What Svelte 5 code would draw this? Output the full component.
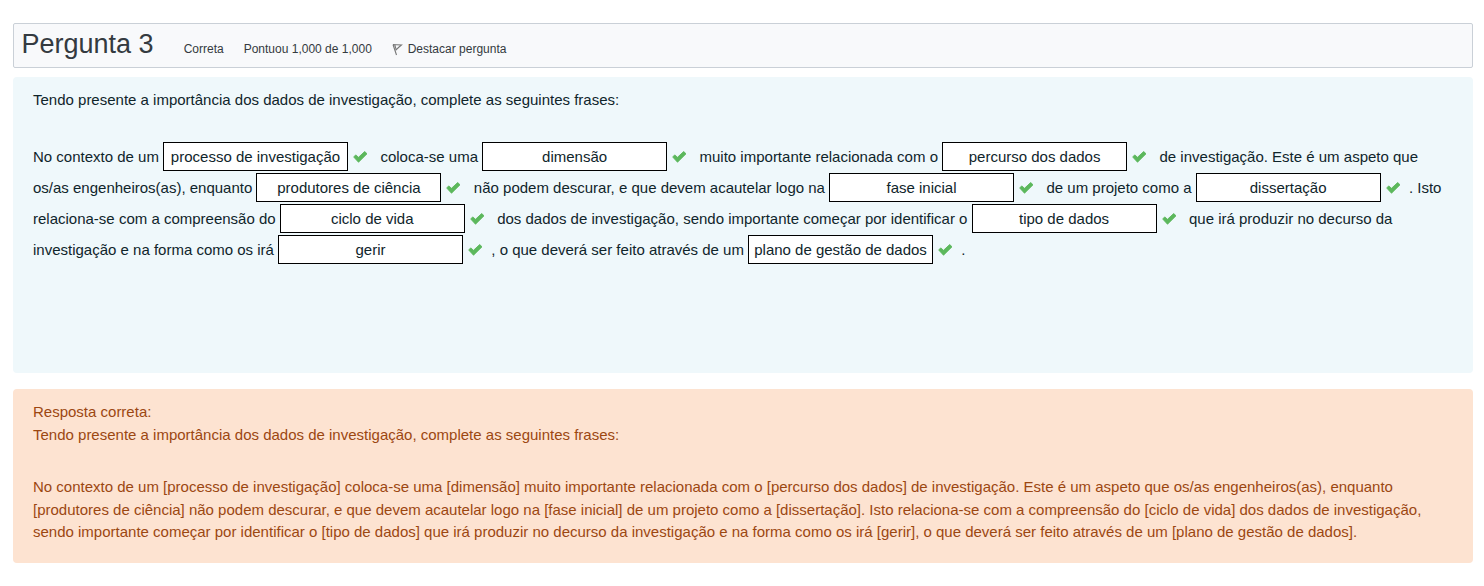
<script>
  const rows = [
    ['No contexto de um', 'processo de investigação', 'coloca-se uma', 'dimensão', 'muito importante relacionada com o', 'percurso dos dados', 'de investigação. Este é um aspeto que'],
    ['os/as engenheiros(as), enquanto', 'produtores de ciência', 'não podem descurar, e que devem acautelar logo na', 'fase inicial', 'de um projeto como a', 'dissertação', '. Isto'],
    ['relaciona-se com a compreensão do', 'ciclo de vida', 'dos dados de investigação, sendo importante começar por identificar o', 'tipo de dados', 'que irá produzir no decurso da'],
    ['investigação e na forma como os irá', 'gerir', ', o que deverá ser feito através de um', 'plano de gestão de dados', '.']
  ];
</script>

<main>
  <header>
    <h3>Pergunta 3</h3>
    <span class="state">Correta</span>
    <span class="grade">Pontuou 1,000 de 1,000</span>
    <svg class="flag" width="11" height="13" viewBox="0 0 11 13"><path d="M1 1.500L4.500 12M1 1.500L4.300 1.700L9.500 2L6.500 4.500L4.200 6.800L2.800 2" fill="none" stroke="#777" stroke-width="1.100" /></svg>
    <span>Destacar pergunta</span>
  </header>

  <section class="formulation">
    <p>Tendo presente a importância dos dados de investigação, complete as seguintes frases:</p>
    <div class="cloze">
      {#each rows as row}
        <div class="line">
          {#each row as part, i}
            {#if i % 2}
              <span class="drop">{part}</span>
              <svg class="check" width="15" height="12" viewBox="0 0 15 12"><path d="M0.700 6L2.700 3.900L5.500 6.300L11.700 0.500L14 2.800L5.500 11.200Z" fill="#5cb85c" stroke="#5cb85c" stroke-width="0.900" stroke-linejoin="round" /></svg>
            {:else}
              <span class="text" class:punctuation={/^[.,]/.test(part)}>{part}</span>
            {/if}
          {/each}
        </div>
      {/each}
    </div>
  </section>

  <section class="outcome">
    <p>Resposta correta:<br />Tendo presente a importância dos dados de investigação, complete as seguintes frases:</p>
    <p class="answer">No contexto de um [processo de investigação] coloca-se uma [dimensão] muito importante relacionada com o [percurso dos dados] de investigação. Este é um aspeto que os/as engenheiros(as), enquanto [produtores de ciência] não podem descurar, e que devem acautelar logo na [fase inicial] de um projeto como a [dissertação]. Isto relaciona-se com a compreensão do [ciclo de vida] dos dados de investigação, sendo importante começar por identificar o [tipo de dados] que irá produzir no decurso da investigação e na forma como os irá [gerir], o que deverá ser feito através de um [plano de gestão de dados].</p>
  </section>
</main>

<style>
  :global(body) { background: #fff; }
  main { padding: 23px 11px 0 13px; height: 586px; box-sizing: border-box; font: 15px/22.5px "Liberation Sans", Arial, sans-serif; color: #1d2125; }
  header { height: 45px; box-sizing: border-box; border: 1px solid #cad0d7; border-radius: 2px; background: #f8f9fb; display: flex; align-items: baseline; padding: 4px 7.500px; font-size: 12px; line-height: 18px; color: #343a40; }
  h3 { margin: 0; font-size: 27px; line-height: 32px; font-weight: 400; width: 162.200px; }
  .state { width: 60px; }
  .grade { width: 148px; }
  .flag { margin-right: 5px; align-self: flex-start; margin-top: 15px; }
  p { margin: 0; }
  .formulation { height: 296px; margin-top: 9px; box-sizing: border-box; padding: 12px 20px; border-radius: 4px; background: #eff8fb; color: #0f252b; }
  .cloze { margin-top: 29px; }
  .line { display: flex; align-items: center; height: 31px; white-space: nowrap; }
  .text { padding-top: 2px; }
  .punctuation { margin-left: -4.200px; }
  .drop { box-sizing: border-box; width: 185px; height: 29px; border: 1px solid #000; background: #fff; text-align: center; line-height: 28px; margin-left: 4.100px; }
  .check { margin: 1px 12.450px 0 5px; }
  .outcome { height: 174px; margin-top: 16px; box-sizing: border-box; padding: 12px 20px; border-radius: 4px; background: #fde3d1; color: #9c4711; }
  .answer { margin-top: 30px; }
</style>
